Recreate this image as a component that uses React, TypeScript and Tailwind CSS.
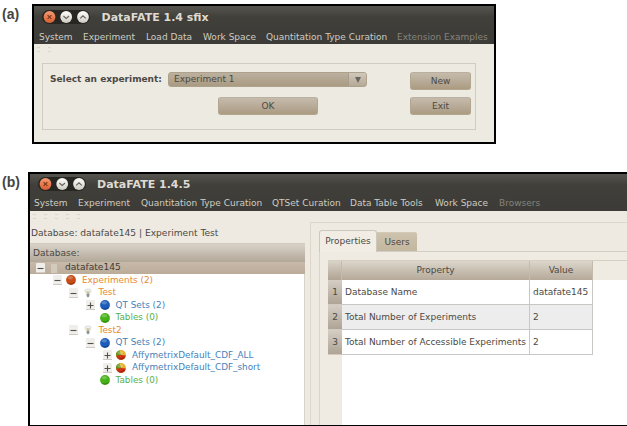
import { clsx } from 'clsx';

const menuA = [
  { label: 'System', w: 'w-[44px]' },
  { label: 'Experiment', w: 'w-[63px]' },
  { label: 'Load Data', w: 'w-[57px]' },
  { label: 'Work Space', w: 'w-[63px]' },
  { label: 'Quantitation Type Curation', w: 'w-[131px]' },
  { label: 'Extension Examples', w: 'w-[90px]', off: true },
];

const menuB = [
  { label: 'System', w: 'w-[44px]' },
  { label: 'Experiment', w: 'w-[63px]' },
  { label: 'Quantitation Type Curation', w: 'w-[131px]' },
  { label: 'QTSet Curation', w: 'w-[78px]' },
  { label: 'Data Table Tools', w: 'w-[85px]' },
  { label: 'Work Space', w: 'w-[64px]' },
  { label: 'Browsers', w: 'w-[50px]', off: true },
];

type Icon = 'red' | 'blue' | 'green' | 'mixed' | 'bulb';

const tree: { label: string; pad: string; color: string; icon: Icon; sign?: '+' | '-' }[] = [
  { label: 'Experiments (2)', pad: 'pl-[22.5px]', color: 'text-[#e8892e]', icon: 'red', sign: '-' },
  { label: 'Test', pad: 'pl-[39px]', color: 'text-[#e8892e]', icon: 'bulb', sign: '-' },
  { label: 'QT Sets (2)', pad: 'pl-[56px]', color: 'text-[#4581b8]', icon: 'blue', sign: '+' },
  { label: 'Tables (0)', pad: 'pl-[56px]', color: 'text-[#58b04c]', icon: 'green' },
  { label: 'Test2', pad: 'pl-[39px]', color: 'text-[#e8892e]', icon: 'bulb', sign: '-' },
  { label: 'QT Sets (2)', pad: 'pl-[56px]', color: 'text-[#4581b8]', icon: 'blue', sign: '-' },
  { label: 'AffymetrixDefault_CDF_ALL', pad: 'pl-[72.5px]', color: 'text-[#4581b8]', icon: 'mixed', sign: '+' },
  { label: 'AffymetrixDefault_CDF_short', pad: 'pl-[72.5px]', color: 'text-[#4581b8]', icon: 'mixed', sign: '+' },
  { label: 'Tables (0)', pad: 'pl-[56px]', color: 'text-[#58b04c]', icon: 'green' },
];

const properties = [
  { name: 'Database Name', value: 'datafate145' },
  { name: 'Total Number of Experiments', value: '2' },
  { name: 'Total Number of Accessible Experiments', value: '2' },
];

function WindowButtons() {
  return (
    <svg className="block shrink-0" width="50" height="16" viewBox="0 0 50 16">
      <defs>
        <linearGradient id="orb" x1="0" y1="0" x2="0" y2="1">
          <stop offset="0" stopColor="#fffefb" />
          <stop offset="1" stopColor="#cfcbc3" />
        </linearGradient>
        <linearGradient id="close" x1="0" y1="0" x2="0" y2="1">
          <stop offset="0" stopColor="#f59a72" />
          <stop offset="1" stopColor="#d95f30" />
        </linearGradient>
      </defs>
      <rect x="1" y="1" width="48" height="14" rx="7" fill="#272623" />
      <circle cx="8.5" cy="8" r="5.9" fill="url(#close)" />
      <path d="M6.6 6.1l3.8 3.8M10.4 6.1L6.6 9.9" stroke="#78341b" strokeWidth="1.1" />
      <circle cx="25.2" cy="8" r="5.9" fill="url(#orb)" />
      <path d="M22.4 7l2.8 2.5L28 7" fill="none" stroke="#67645e" strokeWidth="1.1" />
      <circle cx="42" cy="8" r="5.9" fill="url(#orb)" />
      <path d="M39.2 9.4L42 6.8l2.8 2.6" fill="none" stroke="#67645e" strokeWidth="1.1" />
    </svg>
  );
}

function MenuBar({ items, className }: { items: { label: string; w: string; off?: boolean }[]; className: string }) {
  return (
    <div className={clsx('flex h-[18px] items-center leading-none', className)}>
      {items.map((m) => (
        <span key={m.label} className={clsx('shrink-0', m.w, m.off ? 'text-[#85837c]' : 'text-[#cfccc2]')}>
          {m.label}
        </span>
      ))}
    </div>
  );
}

function ToolbarGrips({ count, className }: { count: number; className: string }) {
  return (
    <div className={clsx('flex shrink-0 gap-[8px]', className)}>
      {Array.from({ length: count }, (_, i) => (
        <span key={i} className="h-[5px] w-[3px] border-y border-[#dad6cd]" />
      ))}
    </div>
  );
}

function Button({ label, className }: { label: string; className: string }) {
  return (
    <button
      className={clsx(
        'flex h-[18px] items-center justify-center rounded-[3px] border border-[#b3a68f] border-t-[#b9b0a2] bg-linear-to-b from-[#c6bbab] via-[#b8ab98] to-[#ab9b82] leading-none',
        className,
      )}
    >
      {label}
    </button>
  );
}

function Expander({ sign }: { sign?: '+' | '-' }) {
  if (!sign) return <span className="w-[9px] shrink-0" />;
  return (
    <svg className="shrink-0" width="9" height="10" viewBox="0 0 9 10">
      <rect width="9" height="10" rx="1" fill="#f0eeea" />
      <path d="M0 9.5h9" stroke="#cfcbc4" />
      <path d={sign === '+' ? 'M1.5 5.5h6M4.5 2.5v6' : 'M1.5 5.5h6'} stroke="#55524c" strokeWidth="1.1" />
    </svg>
  );
}

function NodeIcon({ icon }: { icon: Icon }) {
  if (icon === 'bulb') {
    return (
      <svg className="shrink-0" width="10" height="10" viewBox="0 0 10 10">
        <path d="M2 1.6Q5-.2 8 1.6Q8.4 4 6.5 6h-3Q1.6 4 2 1.6z" fill="#efefed" stroke="#d3d3d0" strokeWidth=".6" />
        <path d="M4 3l.8 3M6.2 3l-.8 3" stroke="#bcae62" strokeWidth=".8" />
        <path d="M3.6 6h2.8v2.2L5 9.4 3.6 8.2z" fill="#8c9296" />
      </svg>
    );
  }
  const fills = { red: '#c84c16', blue: '#1c5cba', green: '#46b218', mixed: '#e9b02a' };
  return (
    <svg className="shrink-0" width="10" height="10" viewBox="0 0 10 10">
      <circle cx="5" cy="5" r="4.9" fill={fills[icon]} />
      {icon === 'mixed' && (
        <>
          <path d="M5 5L1.2 1.9A4.9 4.9 0 0 0 3.4 9.6z" fill="#cf2d16" />
          <path d="M5 5L9.8 5.6A4.9 4.9 0 0 1 3 9.4z" fill="#cf2d16" />
          <path d="M5 5L3.6.3A4.9 4.9 0 0 0 .2 5.8z" fill="#5f9d22" />
        </>
      )}
      <ellipse cx="4.3" cy="2.8" rx="2.8" ry="1.7" fill="#fff" opacity=".24" />
      <path d="M1 7.8A4.9 4.9 0 0 0 9.7 6.2Q6 9 1 7.8z" fill="#000" opacity=".2" />
    </svg>
  );
}

function ExperimentDialog() {
  return (
    <div className="ml-[32px] flex h-[140px] w-[464px] flex-col border-2 border-black bg-[#edeae2]">
      <div className="h-[38px] shrink-0 bg-linear-to-b from-[#565550] via-[#403f3a] via-30% to-[#3c3b37]">
        <div className="flex h-[22px] items-center pl-[7px]">
          <WindowButtons />
          <span className="ml-[10.5px] text-[11px] leading-none font-bold text-[#dfdbd2]">DataFATE 1.4 sfix</span>
        </div>
        <MenuBar items={menuA} className="pl-[5px]" />
      </div>
      <ToolbarGrips count={2} className="mt-[3px] ml-[3px]" />
      <div className="mt-[11px] mr-[18px] ml-[8px] h-[67px] border border-[#d0ccc4] pt-[8px] pl-[7px]">
        <div className="flex">
          <span className="mt-[3px] w-[118px] leading-none font-bold whitespace-nowrap">Select an experiment:</span>
          <div className="flex h-[15px] w-[199px] overflow-hidden rounded-[3px] border border-[#afa28d] bg-linear-to-b from-[#bcb09f] to-[#a99b82] leading-none">
            <span className="flex-1 pt-[2px] pl-[5px]">Experiment 1</span>
            <span className="flex w-[18px] items-center justify-center border-l border-[#a79d8d] bg-linear-to-b from-[#d0c8bc] to-[#b5a996]">
              <svg width="8" height="8" viewBox="0 0 8 8">
                <path d="M1 1h6L4 7z" fill="#69645c" />
              </svg>
            </span>
          </div>
          <Button label="New" className="ml-[43px] w-[61px]" />
        </div>
        <div className="mt-[7px] flex pl-[168px]">
          <Button label="OK" className="w-[100px]" />
          <Button label="Exit" className="ml-[92px] w-[61px]" />
        </div>
      </div>
    </div>
  );
}

function DatabaseTree() {
  return (
    <div className="flex w-[275px] shrink-0 flex-col">
      <ToolbarGrips count={5} className="mt-[3px] ml-[3px]" />
      <div className="mt-[9px] h-[15px] pl-[1px] text-[9.1px] leading-[11px] whitespace-nowrap">
        Database: datafate145 | Experiment Test
      </div>
      <div className="h-[19px] border-t border-[#d0c9bd] bg-linear-to-b from-[#d8d2c8] to-[#b2a898] pl-[3px] text-[9.1px] leading-[18px]">
        Database:
      </div>
      <div className="flex h-[12px] items-center bg-linear-to-b from-[#c8baa9] to-[#bbac9a] pl-[5.5px] text-[9.1px] leading-none text-[#3e3b36]">
        <Expander sign="-" />
        <span className="ml-[6px] h-[9px] w-[7px] border-r border-[#bdb6a9] bg-[#d2cabc]" />
        <span className="ml-[7.5px]">datafate145</span>
      </div>
      <div className="flex-1 border-r border-[#d8d3ca] bg-white text-[8.85px]">
        {tree.map((n, i) => (
          <div key={i} className={clsx('flex h-[12.5px] items-center leading-none whitespace-nowrap', n.pad, n.color)}>
            <Expander sign={n.sign} />
            <span className="mr-[6px] ml-[4.5px]">
              <NodeIcon icon={n.icon} />
            </span>
            <span>{n.label}</span>
          </div>
        ))}
      </div>
    </div>
  );
}

function PropertiesPane() {
  return (
    <div className="mt-[11px] ml-[5px] flex flex-1 flex-col border-t border-l border-[#dcd6cb] pl-[8px]">
      <div className="flex h-[29px] shrink-0 items-end border-b border-[#d3cec4] leading-none">
        <div className="-mb-px flex h-[22px] w-[58px] items-center justify-center rounded-t-[3px] border border-b-0 border-[#cdc7bb] bg-[#f1ede5]">
          Properties
        </div>
        <div className="flex h-[19px] w-[40px] items-center justify-center rounded-tr-[2px] border-t border-[#d3c9b5] bg-linear-to-b from-[#cdc2ad] to-[#c3b79f]">
          Users
        </div>
      </div>
      <div className="flex-1 border-l border-[#d9d3c8] bg-[#f0ebe2] pt-[8px] pl-[8px]">
        <div className="grid h-full grid-cols-[14px_188px_63px_1fr] grid-rows-[19px_25px_25px_25px_1fr] border-t border-[#d5cec2]">
          <div className="border-r border-[#c4bbad] bg-linear-to-b from-[#dad3c8] to-[#afa393]" />
          <div className="border-r border-[#c4bbad] bg-linear-to-b from-[#dcd6cb] to-[#b5a999] text-center leading-[19px]">
            Property
          </div>
          <div className="border-r border-[#c4bbad] bg-linear-to-b from-[#dcd6cb] to-[#b5a999] text-center leading-[19px]">
            Value
          </div>
          <div />
          {properties.map((p, i) => (
            <div key={p.name} className="col-span-4 grid grid-cols-subgrid leading-[24px] whitespace-nowrap">
              <div className="border-b border-[#d1cabf] bg-linear-to-b from-[#d5cec4] to-[#afa495] text-center">{i + 1}</div>
              <div className={clsx('border-r border-b border-[#c9c7c3] pl-[3px]', i === 1 ? 'bg-[#ededed]' : 'bg-white')}>
                {p.name}
              </div>
              <div className={clsx('border-r border-b border-[#c9c7c3] pl-[3px]', i === 1 ? 'bg-[#ededed]' : 'bg-white')}>
                {p.value}
              </div>
              <div className="bg-white" />
            </div>
          ))}
          <div />
          <div className="col-span-3 bg-white" />
        </div>
      </div>
    </div>
  );
}

function DatabaseWindow() {
  return (
    <div className="ml-[28px] flex h-[254px] flex-col border-2 border-r-0 border-b border-black bg-[#eeeae2]">
      <div className="h-[37px] shrink-0 bg-linear-to-b from-[#565550] via-[#403f3a] via-30% to-[#3c3b37]">
        <div className="flex h-[20px] items-center pl-[6.5px]">
          <WindowButtons />
          <span className="ml-[10.5px] text-[11px] leading-none font-bold text-[#dfdbd2]">DataFATE 1.4.5</span>
        </div>
        <MenuBar items={menuB} className="pl-[4px]" />
      </div>
      <div className="flex min-h-0 flex-1">
        <DatabaseTree />
        <PropertiesPane />
      </div>
    </div>
  );
}

export default function App() {
  return (
    <div className="relative h-[426px] w-[627px] overflow-hidden bg-white pt-[4px] font-['DejaVu_Sans',sans-serif] text-[9px] whitespace-nowrap text-[#4c4944]">
      <span className="absolute top-[7px] left-[2px] font-['Liberation_Sans',sans-serif] text-[14px] leading-none font-bold text-[#444]">
        (a)
      </span>
      <ExperimentDialog />
      <span className="absolute top-[175px] left-[2px] font-['Liberation_Sans',sans-serif] text-[14px] leading-none font-bold text-[#444]">
        (b)
      </span>
      <div className="mt-[28px]">
        <DatabaseWindow />
      </div>
    </div>
  );
}
